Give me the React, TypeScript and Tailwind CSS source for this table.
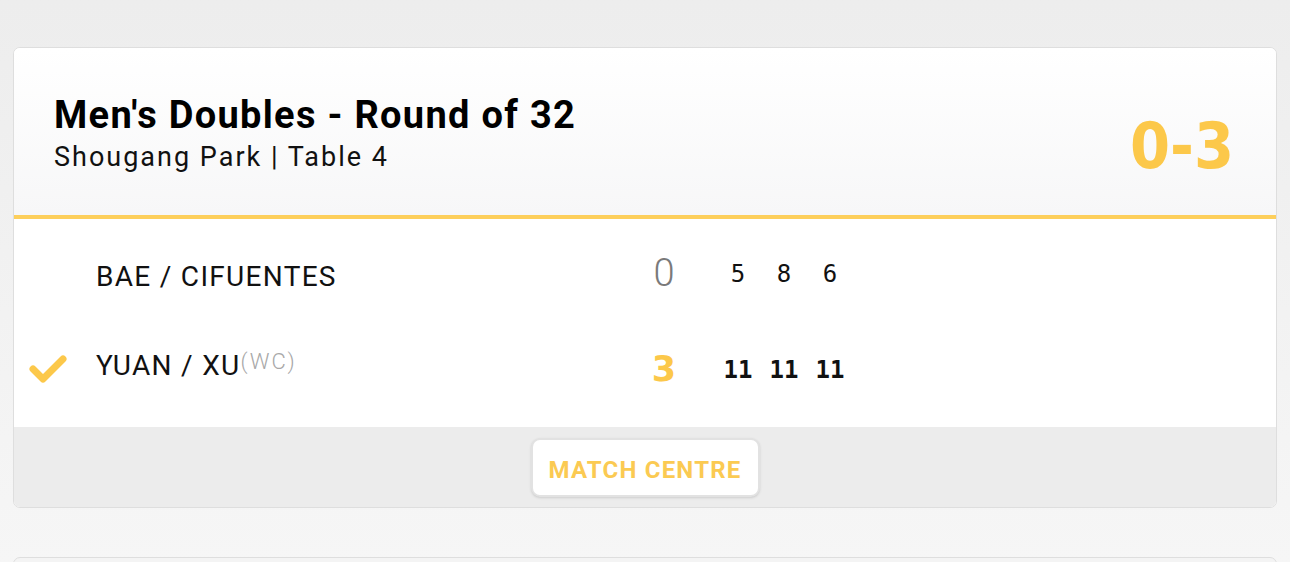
import React from "react";

const games = [
  { a: 5, b: 11 },
  { a: 8, b: 11 },
  { a: 6, b: 11 },
];

const CheckIcon = () => (
  <svg width="38" height="30" viewBox="0 0 38 30" fill="none">
    <path
      d="M4 15 L14 25 L34 5"
      stroke="#fcc84a"
      strokeWidth="7"
      strokeLinecap="round"
      strokeLinejoin="round"
    />
  </svg>
);

const App: React.FC = () => {
  return (
    <div
      className="h-[562px] w-[1290px] overflow-hidden bg-gradient-to-b from-[#ededed] to-[#f6f6f6] pt-[47px] pl-[13px] pr-[13px]"
      style={{ fontFamily: "Roboto, 'Liberation Sans', sans-serif" }}
    >
      <div className="overflow-hidden rounded-[7px] border border-[#dedede] bg-white">
        {/* header */}
        <div className="flex h-[171px] items-center justify-between border-b-4 border-[#fdcf5b] bg-gradient-to-b from-white to-[#f7f7f8] pl-[40px] pr-[42px] pb-[4px]">
          <div className="flex flex-col pt-[6px]">
            <h1 className="text-[38px] leading-[44px] font-bold tracking-[1.3px] text-black">
              Men's Doubles - Round of 32
            </h1>
            <p className="mt-[4px] text-[27px] leading-[32px] tracking-[2px] text-[#111]">Shougang Park | Table 4</p>
          </div>
          <div
            className="mt-[32px] text-[64px] leading-none font-bold text-[#fcc84a]"
            style={{ fontFamily: "'DejaVu Sans Condensed', sans-serif" }}
          >
            0-3
          </div>
        </div>

        {/* body */}
        <div className="flex flex-col pt-[11px] pb-[17px]">
          <div className="flex h-[90px] items-center">
            <div className="w-[82px]" />
            <div className="w-[543px] pt-[4px] text-[28px] tracking-[1.3px] text-[#111]">BAE / CIFUENTES</div>
            <div className="mb-[4px] w-[50px] text-center text-[38px] font-light text-[#7a7a7a]">0</div>
            <div
              className="mb-[2px] ml-[26px] flex text-[24px] text-[#111]"
              style={{ fontFamily: "'DejaVu Sans Mono', monospace" }}
            >
              {games.map((g, i) => (
                <span key={i} className="w-[46px] text-center">
                  {g.a}
                </span>
              ))}
            </div>
          </div>
          <div className="flex h-[90px] items-center">
            <div className="flex w-[82px] justify-center pr-[14px] pt-[8px]">
              <CheckIcon />
            </div>
            <div className="w-[543px] pt-[2px] text-[28px] tracking-[1.3px] text-[#111]">
              YUAN / XU
              <span className="relative top-[-6px] text-[22px] font-light tracking-[2px] text-[#a8a8a8]">(WC)</span>
            </div>
            <div
              className="mt-[8px] w-[50px] text-center text-[35px] font-bold text-[#fcc84a]"
              style={{ fontFamily: "'DejaVu Sans', sans-serif" }}
            >
              3
            </div>
            <div
              className="mt-[9px] ml-[26px] flex text-[24px] font-bold text-[#111]"
              style={{ fontFamily: "'DejaVu Sans Mono', monospace" }}
            >
              {games.map((g, i) => (
                <span key={i} className="w-[46px] text-center">
                  {g.b}
                </span>
              ))}
            </div>
          </div>
        </div>

        {/* footer */}
        <div className="flex h-[80px] items-center justify-center bg-[#ececec]">
          <button className="h-[59px] w-[229px] rounded-[9px] border-2 border-[#e2e2e2] bg-white pt-[5px] text-[24px] font-bold tracking-[1.2px] text-[#fbca52] shadow-sm">
            MATCH CENTRE
          </button>
        </div>
      </div>

      <div className="mt-[49px] h-[20px] rounded-t-[7px] border border-[#dedede] bg-[#f4f4f4]" />
    </div>
  );
};

export default App;
